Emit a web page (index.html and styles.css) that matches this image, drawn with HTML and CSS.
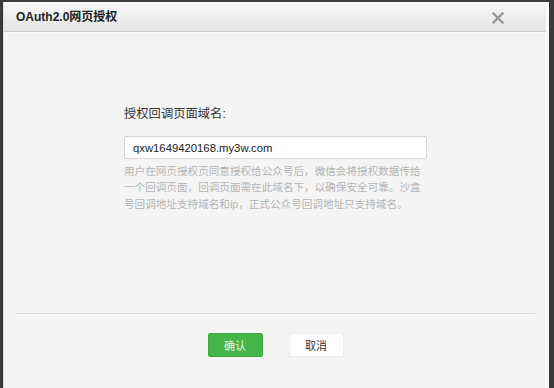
FILE: index.html
```html
<!DOCTYPE html>
<html lang="zh-CN">
<head>
    <meta charset="UTF-8">
    <meta name="viewport" content="width=device-width, initial-scale=1.0">
    <title>OAuth2.0网页授权</title>
    <link rel="stylesheet" href="styles.css">
</head>
<body>
    <div class="dialog">
        <div class="dialog-hd">
            <h3>OAuth2.0网页授权</h3>
            <span class="close">
                <svg width="12" height="12" viewBox="0 0 12 12">
                    <path d="M1.5 1.5 L10.5 10.5 M10.5 1.5 L1.5 10.5" stroke="#9a9a9a" stroke-width="2.4" stroke-linecap="square"/>
                </svg>
            </span>
        </div>
        <div class="dialog-bd">
            <div class="form">
                <label class="form-label">授权回调页面域名:</label>
                <input class="form-input" type="text" value="qxw1649420168.my3w.com">
                <p class="form-tips">用户在网页授权页同意授权给公众号后，微信会将授权数据传给一个回调页面，回调页面需在此域名下，以确保安全可靠。沙盒号回调地址支持域名和ip，正式公众号回调地址只支持域名。</p>
            </div>
        </div>
        <div class="dialog-ft">
            <button class="btn btn-primary">确认</button>
            <button class="btn btn-default">取消</button>
        </div>
    </div>
</body>
</html>
```

FILE: styles.css
```css
body {
    margin: 0;
    padding: 2px 5px 0 3px;
    background-color: #3a3a3a;
    font-family: "Liberation Sans", "Noto Sans CJK SC", sans-serif;
    height: 388px;
    box-sizing: border-box;
    overflow: hidden;
}

.dialog {
    height: 386px;
    background-color: #f4f4f4;
    border-left: 1px solid #d9d9d9;
    border-right: 3px solid #fafafa;
    display: flex;
    flex-direction: column;
}

.dialog-hd {
    height: 28px;
    padding: 0 42px 0 12px;
    display: flex;
    align-items: center;
    justify-content: space-between;
    background: linear-gradient(#f7f7f7, #e5e5e5);
    border-top: 1px solid #fdfdfd;
    border-bottom: 1px solid #cfcfcf;
    box-shadow: 0 1px 0 #fafafa;
}

.dialog-hd h3 {
    margin: 0;
    font-size: 12px;
    font-weight: bold;
    color: #222;
    line-height: 16px;
}

.close {
    display: flex;
    margin-top: 1px;
}

.dialog-bd {
    flex: 1;
    padding: 73px 0 0 120px;
}

.form {
    width: 303px;
}

.form-label {
    display: block;
    font-size: 12.3px;
    line-height: 18px;
    color: #353535;
}

.form-input {
    display: block;
    box-sizing: border-box;
    width: 303px;
    height: 23px;
    margin-top: 13px;
    padding: 0 8px;
    border: 1px solid #d6d6d6;
    border-radius: 2px;
    background-color: white;
    font-family: "Liberation Sans", sans-serif;
    font-size: 11.3px;
    color: #222;
    outline: none;
}

.form-tips {
    margin: 4px 0 0;
    font-size: 10.6px;
    line-height: 16.4px;
    color: #b5b5b5;
}

.dialog-ft {
    margin: 0 11px 0 12px;
    height: 75px;
    border-top: 1px solid #d8d8d8;
    box-shadow: inset 0 1px 0 #fbfbfb;
    display: flex;
    justify-content: center;
    align-items: flex-start;
    padding-top: 19px;
    gap: 26px;
    box-sizing: border-box;
}

.btn {
    width: 55px;
    height: 24px;
    border-radius: 2px;
    font-family: "Noto Sans CJK SC", sans-serif;
    font-size: 11px;
    padding: 0;
    cursor: pointer;
}

.btn-primary {
    background-color: #44b549;
    border: 1px solid #3eaa43;
    color: #e8f6e8;
}

.btn-default {
    background-color: white;
    border: 1px solid #ececec;
    color: #333;
}
```
